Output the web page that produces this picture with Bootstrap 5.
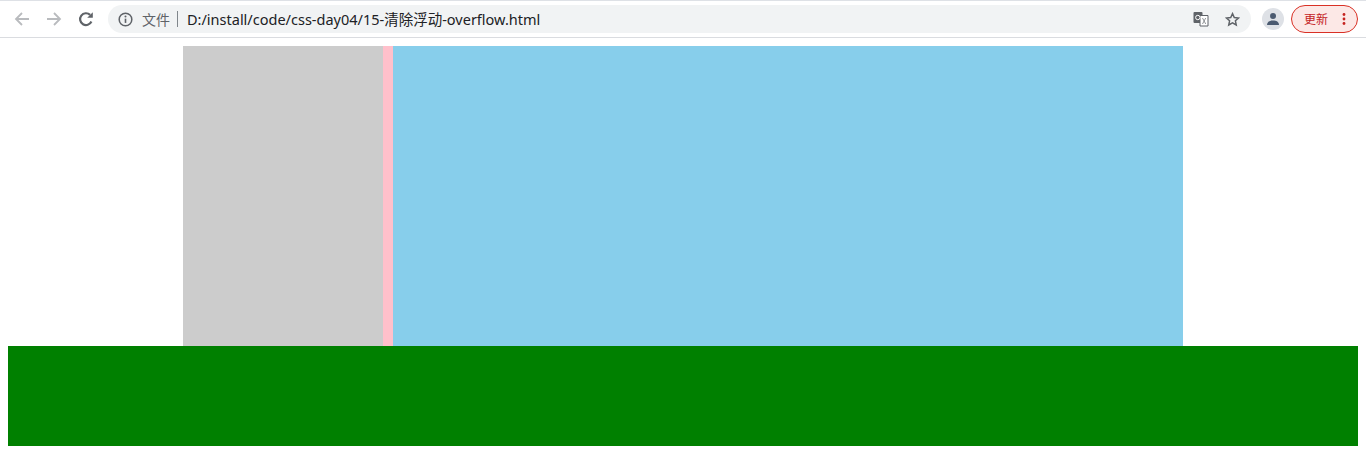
<!DOCTYPE html>
<html lang="zh">
<head>
<meta charset="utf-8">
<title>15-清除浮动-overflow</title>
<link href="https://cdn.jsdelivr.net/npm/bootstrap@5.3.0/dist/css/bootstrap.min.css" rel="stylesheet">
<style>
html,body{background:#fff;overflow:hidden}
.chrome-bar{height:38px;border-top:1px solid #dee1e6;border-bottom:1px solid #dadce0;background:#fff;padding-left:6px;padding-right:8px;font-family:"Liberation Sans","Noto Sans CJK SC",sans-serif}
.nav-ico{width:32px;height:28px;flex:none}
.omni{width:1143px;height:28px;margin-left:6px;background:#f1f3f4;border-radius:14px;flex:none;padding:0 11px 0 10px}
.omni-label{font-size:14px;color:#5f6368;font-family:"Noto Sans CJK SC",sans-serif;margin-left:9px;line-height:1}
.omni-sep{width:1px;height:16px;background:#80868b;margin:0 9px 0 7px}
.omni-url{font-family:"Noto Sans","Noto Sans CJK SC",sans-serif;font-size:14.5px;color:#202124;line-height:1;white-space:nowrap}
.avatar{width:22px;height:22px;border-radius:50%;background:#dee1e6;margin-left:11px;flex:none}
.update-pill{width:67px;height:28px;border:1px solid #d93025;border-radius:14px;background:#fce8e6;margin-left:7px;flex:none;color:#c5221f;font-size:12px;font-family:"Noto Sans CJK SC",sans-serif;padding:0 11px 0 12px}
.stage{padding:8px 8px 0}
.float-wrap{width:1000px;height:300px}
.box-gray{width:200px;background:#ccc}
.box-pink{width:10px;background:pink}
.box-blue{width:790px;background:skyblue}
.box-green{height:100px;background:green}
</style>
</head>
<body>
<div class="chrome-bar d-flex align-items-center">
  <div class="nav-ico d-flex align-items-center justify-content-center">
    <svg width="16" height="16" viewBox="0 0 16 16" fill="none" stroke="#b9bbbe" stroke-width="1.8"><path d="M15 8H2M8 2 2 8l6 6"/></svg>
  </div>
  <div class="nav-ico d-flex align-items-center justify-content-center">
    <svg width="16" height="16" viewBox="0 0 16 16" fill="none" stroke="#b9bbbe" stroke-width="1.8"><path d="M1 8h13M8 2l6 6-6 6"/></svg>
  </div>
  <div class="nav-ico d-flex align-items-center justify-content-center">
    <svg width="16" height="16" viewBox="0 0 16 16" fill="none"><path d="M13.4 10.5A5.9 5.9 0 1 1 12.1 3.9" stroke="#5f6368" stroke-width="2.2"/><path d="M9.2 6.8h5.6V1.2z" fill="#5f6368"/></svg>
  </div>
  <div class="omni d-flex align-items-center">
    <svg width="15" height="15" viewBox="0 0 14 14" fill="none" class="flex-shrink-0"><circle cx="7" cy="7" r="5.9" stroke="#5f6368" stroke-width="1.4"/><path d="M7 6.2v4" stroke="#5f6368" stroke-width="1.5"/><circle cx="7" cy="4.2" r=".95" fill="#5f6368"/></svg>
    <span class="omni-label">文件</span>
    <span class="omni-sep"></span>
    <span class="omni-url">D:/install/code/css-day04/15-清除浮动-overflow.html</span>
    <div class="ms-auto d-flex align-items-center gap-3">
      <svg width="16" height="16" viewBox="0 0 16 16"><rect x="0.5" y="1" width="9" height="11" rx="1" fill="#5f6368"/><path d="M7 4.5h8v10.5H7z" fill="#fff" stroke="#5f6368"/><circle cx="4.8" cy="6.5" r="2.2" fill="none" stroke="#fff"/><path d="m9.5 7 3.2 6M12.7 7l-3.2 6" stroke="#85898d" stroke-width=".9"/></svg>
      <svg width="15" height="15" viewBox="0 0 16 16" fill="none" stroke="#5f6368" stroke-width="1.6"><path d="m8 1.8 1.9 4.1 4.5.5-3.3 3 .9 4.4L8 11.6l-4 2.2.9-4.4-3.3-3 4.5-.5z"/></svg>
    </div>
  </div>
  <div class="avatar d-flex align-items-center justify-content-center">
    <svg width="14" height="14" viewBox="0 0 14 14" fill="#4a5a70"><circle cx="7" cy="4" r="3"/><path d="M1 13c0-3.2 2.6-4.6 6-4.6s6 1.4 6 4.6z"/></svg>
  </div>
  <div class="update-pill d-flex align-items-center justify-content-between">
    <span>更新</span>
    <svg width="4" height="14" viewBox="0 0 4 14" fill="#c5221f"><circle cx="2" cy="2.5" r="1.4"/><circle cx="2" cy="7" r="1.4"/><circle cx="2" cy="11.5" r="1.4"/></svg>
  </div>
</div>
<div class="stage">
  <div class="float-wrap d-flex mx-auto">
    <div class="box-gray"></div>
    <div class="box-pink"></div>
    <div class="box-blue"></div>
  </div>
  <div class="box-green"></div>
</div>
<script src="https://cdn.jsdelivr.net/npm/bootstrap@5.3.0/dist/js/bootstrap.bundle.min.js"></script>
</body>
</html>
